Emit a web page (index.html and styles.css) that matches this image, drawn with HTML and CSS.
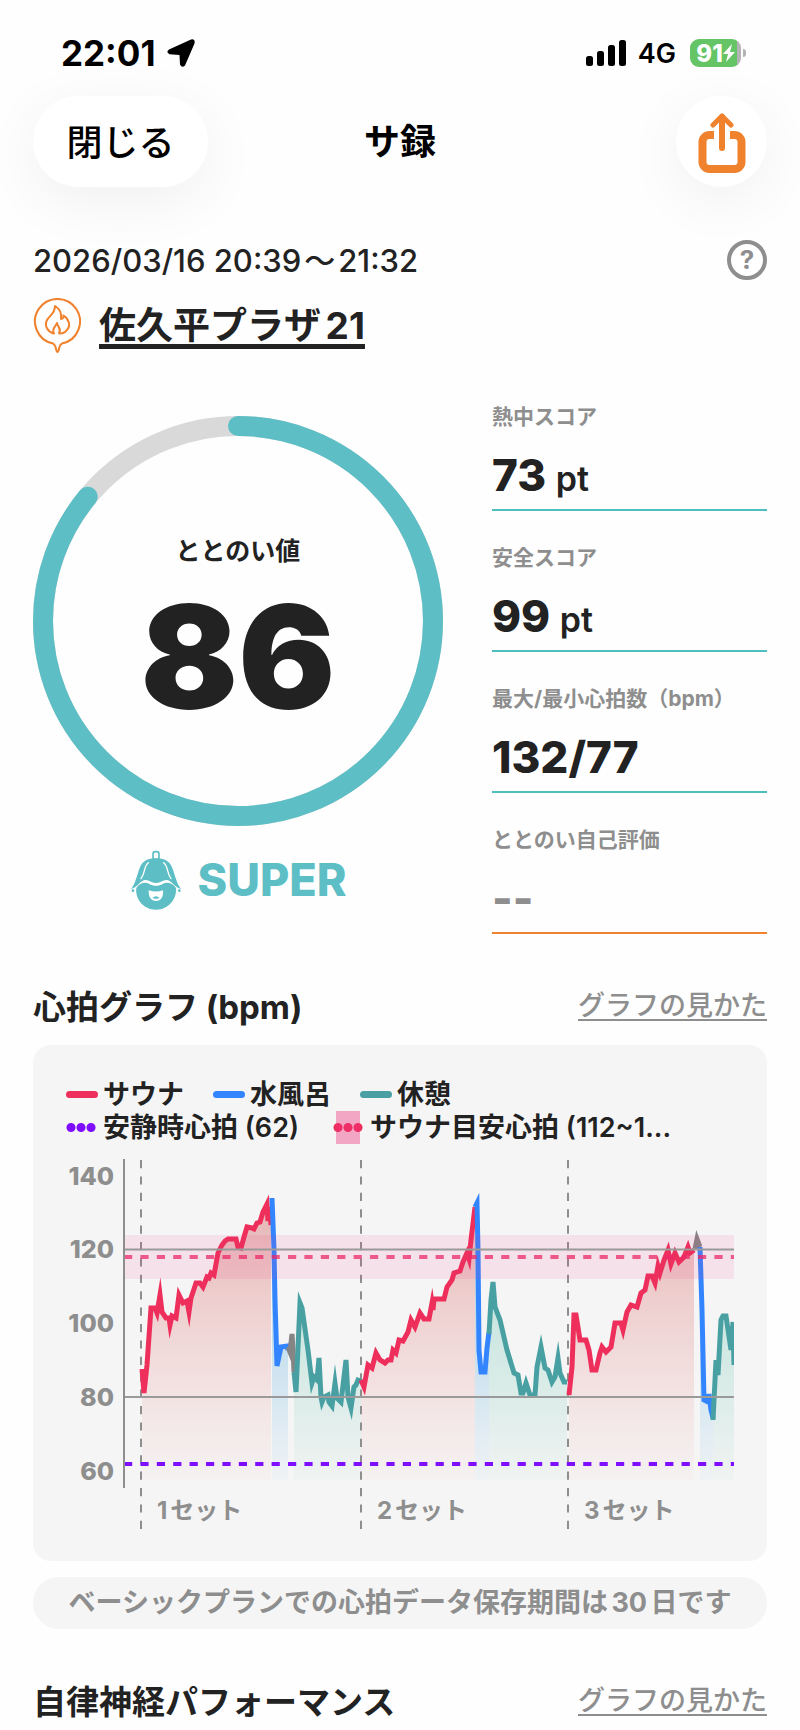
FILE: index.html
```html
<!DOCTYPE html>
<html lang="ja">

<head>
    <meta charset="UTF-8">
    <meta name="viewport" content="width=device-width, initial-scale=1.0">
    <title>サ録</title>
    <link rel="stylesheet" href="styles.css">
</head>

<body>
    <div class="status">
        <span class="time">22:01</span>
        <svg class="location" viewBox="0 0 28 28" width="28" height="28">
            <path d="M24 .5L2 10.500Q-1.500 13 2.500 15.200L12.500 16L13 25.500Q15 29.500 18 26.500L27.500 4.500Q28.500 -1 24 .5Z" />
        </svg>
        <svg class="signal" viewBox="0 0 40 26" width="40" height="26">
            <rect x="0" y="16" width="7" height="10" rx="2.500" />
            <rect x="11" y="11" width="7" height="15" rx="2.500" />
            <rect x="22" y="5" width="7" height="21" rx="2.500" />
            <rect x="33" y="0" width="7" height="26" rx="2.500" />
        </svg>
        <span class="network">4G</span>
        <span class="battery">
            <span class="level">91</span>
            <svg viewBox="0 0 12 18" width="12" height="18">
                <path d="M9 0L0 10h5L3 18l9-10H7z" fill="#fff" />
            </svg>
        </span>
    </div>

    <header class="nav">
        <button class="close" type="button">閉じる</button>
        <h1>サ録</h1>
        <button class="share" type="button" aria-label="共有">
            <svg viewBox="0 0 48 60" width="48" height="60" fill="none" stroke="#f0822d">
                <path d="M16 22H11.500a7 7 0 0 0-7 7V49a7 7 0 0 0 7 7H36.500a7 7 0 0 0 7-7V29a7 7 0 0 0-7-7H32" stroke-width="8" />
                <path d="M24 35V4" stroke-width="6" stroke-linecap="round" />
                <path d="M15 12L24 3L33 12" stroke-width="5" stroke-linecap="round" stroke-linejoin="round" />
            </svg>
        </button>
    </header>

    <main>
        <div class="date">
            <time>2026/03/16 20:39<span>〜</span>21:32</time>
            <button class="help" type="button" aria-label="ヘルプ">?</button>
        </div>
        <div class="place">
            <svg viewBox="0 0 48 56" width="48" height="56" fill="none" stroke="#f0822d" stroke-width="2" stroke-linejoin="round">
                <path d="M20 45.500A22.500 22.500 0 1 1 29 45.500Q26.500 47 26 51Q24.500 57 23 51Q22.500 47 20 45.500Z" />
                <path d="M21 35.500C15 34 11 28 14 22C16 18 22 16 22 8C27 11 29 15 28 21C30 21 31 19 30.500 17.500C36 21 38 28 34 32C32 35 28 36 26 35C29 31 25 30 24 25C23 28 18 31 21 35.500Z" />
            </svg>
            <a href="#">佐久平プラザ21</a>
        </div>

        <section class="scores">
            <div class="total">
                <div class="ring">
                    <svg viewBox="0 0 410 410" fill="none" stroke-width="20">
                        <circle cx="205" cy="205" r="195" stroke="#d9d9d9" />
                        <circle cx="205" cy="205" r="195" stroke="#5dbfc5" stroke-linecap="round" pathLength="100" stroke-dasharray="86 100" transform="rotate(-90 205 205)" />
                    </svg>
                    <div class="ring-text">
                        <span class="ring-label">ととのい値</span>
                        <strong>86</strong>
                    </div>
                </div>
                <div class="rank">
                    <svg viewBox="15 14 156 180" width="52" height="60" fill="#5dbfc5">
                        <rect x="84" y="19" width="18" height="24" rx="7" fill="none" stroke="#5dbfc5" stroke-width="5" />
                        <path d="M34 128C44 112 60 110 72 115C84 123 102 123 114 115C126 110 142 112 153 128C156 162 130 193 93 193C56 193 30 162 34 128Z" />
                        <path d="M18 131C30 118 36 90 44 68C52 46 70 39 93 39C116 39 134 46 142 68C150 90 156 118 169 131C150 128 140 104 124 104C112 104 108 113 93 113C78 113 74 104 62 104C46 104 36 128 18 131Z" />
                        <path d="M70 52C55 64 62 82 48 100M116 52C131 64 124 82 138 100" fill="none" stroke="#fff" stroke-width="4" stroke-linecap="round" />
                        <path d="M71 135Q93 142 114 135C116 154 108 167 93 167C78 167 70 154 71 135Z" fill="#fff" />
                        <path d="M82 158Q93 148 104 158Q93 162 82 158Z" />
                        <circle cx="24" cy="136" r="4" />
                        <circle cx="163" cy="136" r="4" />
                    </svg>
                    <span>SUPER</span>
                </div>
            </div>
            <dl class="items">
                <div>
                    <dt>熱中スコア</dt>
                    <dd>73 <small>pt</small></dd>
                </div>
                <div>
                    <dt>安全スコア</dt>
                    <dd>99 <small>pt</small></dd>
                </div>
                <div>
                    <dt>最大/最小心拍数（bpm）</dt>
                    <dd>132/77</dd>
                </div>
                <div class="empty">
                    <dt>ととのい自己評価</dt>
                    <dd>--</dd>
                </div>
            </dl>
        </section>

        <div class="heading">
            <h2>心拍グラフ (bpm)</h2>
            <a href="#">グラフの見かた</a>
        </div>
        <section class="card">
            <ul class="legend">
                <li><i class="bar red"></i>サウナ</li>
                <li><i class="bar blue"></i>水風呂</li>
                <li><i class="bar teal"></i>休憩</li>
            </ul>
            <ul class="legend guides">
                <li><i class="dots purple"></i>安静時心拍 (62)</li>
                <li><i class="dots pink"></i>サウナ目安心拍 (112~1...</li>
            </ul>
            <svg class="chart" viewBox="-58 -1 668 370">
                <defs>
                    <linearGradient id="fill-red" gradientUnits="userSpaceOnUse" x1="0" y1="60" x2="0" y2="320">
                        <stop offset="0" stop-color="#d05050" stop-opacity=".36" />
                        <stop offset="1" stop-color="#f08080" stop-opacity=".03" />
                    </linearGradient>
                    <linearGradient id="fill-blue" gradientUnits="userSpaceOnUse" x1="0" y1="90" x2="0" y2="320">
                        <stop offset="0" stop-color="#3aa0c8" stop-opacity=".4" />
                        <stop offset="1" stop-color="#3aa0e8" stop-opacity=".03" />
                    </linearGradient>
                    <linearGradient id="fill-teal" gradientUnits="userSpaceOnUse" x1="0" y1="130" x2="0" y2="320">
                        <stop offset="0" stop-color="#45b8a0" stop-opacity=".28" />
                        <stop offset="1" stop-color="#45b8a0" stop-opacity=".03" />
                    </linearGradient>
                    <clipPath id="plot">
                        <rect x="0" y="0" width="610" height="330" />
                    </clipPath>
                </defs>
                <g class="sets">
                    <path d="M17 0V369M237 0V369M444 0V369" />
                </g>
                <g clip-path="url(#plot)">
                    <g id="areas"></g>
                    <g id="lines"></g>
                </g>
                <rect class="band" x="0" y="75" width="610" height="44" />
                <path class="grid" d="M0 89.500H610M0 237H610" />
                <path class="target" d="M0 97H610" />
                <path class="rest" d="M0 304H610" />
                <path class="axis" d="M0 -1V328" />
                <g class="y-labels">
                    <text x="-10" y="25">140</text>
                    <text x="-10" y="98">120</text>
                    <text x="-10" y="172">100</text>
                    <text x="-10" y="246">80</text>
                    <text x="-10" y="320">60</text>
                </g>
                <g class="x-labels">
                    <text x="33" y="359">1セット</text>
                    <text x="253" y="359">2セット</text>
                    <text x="460" y="359">3セット</text>
                </g>
            </svg>
        </section>
        <p class="note">ベーシックプランでの心拍データ保存期間は30日です</p>

        <div class="heading">
            <h2>自律神経パフォーマンス</h2>
            <a href="#">グラフの見かた</a>
        </div>
    </main>
    <script src="chart.js"></script>
</body>

</html>
```

FILE: styles.css
```css
* {
    margin: 0;
    padding: 0;
    box-sizing: border-box;
}

body {
    background: #fefefe;
    color: #222;
    font-family: Inter, "Noto Sans CJK JP", sans-serif;
    text-autospace: normal;
}

svg {
    display: block;
}

button {
    border: none;
    background: #fff;
    font-family: inherit;
    cursor: pointer;
}

ul {
    list-style: none;
}

/* status bar */
.status {
    display: flex;
    align-items: center;
    height: 96px;
    padding: 10px 54px 0 61px;
    color: #000;
}

.time {
    font-size: 35px;
    font-weight: 700;
}

.location {
    margin-left: 12px;
}

.signal {
    margin-left: auto;
}

.network {
    margin: 0 14px 0 12px;
    font-size: 27px;
    font-weight: 600;
}

.battery {
    display: flex;
    align-items: center;
    justify-content: center;
    position: relative;
    width: 51px;
    height: 28px;
    margin-right: 5px;
    border-radius: 9px;
    background: linear-gradient(90deg, #65c466 92%, #b3b3b3 92%);
    color: #fff;
}

.battery::after {
    content: "";
    position: absolute;
    right: -5px;
    top: 10px;
    width: 3px;
    height: 8px;
    border-radius: 0 3px 3px 0;
    background: #b3b3b3;
}

.level {
    font-size: 24px;
    font-weight: 800;
}

/* nav */
.nav {
    display: grid;
    grid-template-columns: 1fr auto 1fr;
    align-items: center;
    padding: 0 33px;
    color: #000;
}

.nav h1 {
    font-size: 36px;
    line-height: 48px;
    font-weight: 700;
}

.close,
.share {
    height: 91px;
    border-radius: 46px;
    box-shadow: 0 14px 60px rgba(0, 0, 0, .06);
}

.close {
    justify-self: start;
    width: 175px;
    padding-bottom: 4px;
    color: #000;
    font-size: 36px;
    font-weight: 500;
}

.share {
    display: grid;
    place-items: center;
    justify-self: end;
    width: 91px;
    padding-top: 2px;
}

main {
    padding: 53px 33px 11px;
}

.date {
    display: flex;
    align-items: flex-start;
    justify-content: space-between;
    height: 42px;
    font-size: 31px;
    line-height: 41px;
    font-weight: 500;
}

.date span {
    margin: 0 3px;
}

.help {
    width: 40px;
    height: 40px;
    border: 4px solid #8e8e8e;
    border-radius: 50%;
    color: #8e8e8e;
    font-size: 26px;
    line-height: 32px;
    font-weight: 700;
}

.place {
    display: flex;
    align-items: center;
    gap: 18px;
    margin-top: 16px;
}

.place a {
    padding-top: 4px;
    border-bottom: 5px solid #222;
    color: #222;
    font-size: 37px;
    line-height: 36px;
    font-weight: 700;
    text-decoration: none;
}

/* scores */
.scores {
    display: grid;
    grid-template-columns: 410fr 275fr;
    gap: 49px;
    margin-top: 48px;
}

.ring {
    position: relative;
    margin-top: 14px;
}

.ring-text {
    display: flex;
    flex-direction: column;
    align-items: center;
    justify-content: center;
    gap: 20px;
    position: absolute;
    inset: 0;
    padding-top: 20px;
}

.ring-label {
    font-size: 25px;
    line-height: 32px;
    font-weight: 700;
}

.ring strong {
    font-size: 144px;
    line-height: 140px;
    font-weight: 900;
}

.rank {
    display: flex;
    align-items: center;
    justify-content: center;
    gap: 16px;
    margin-top: 24px;
    color: #5dbfc5;
    font-size: 45px;
    line-height: 60px;
    font-weight: 800;
}

.items {
    display: flex;
    flex-direction: column;
    gap: 32px;
}

.items div {
    padding-bottom: 9px;
    border-bottom: 2px solid #4dbfbf;
}

.items dt {
    color: #8e8e8e;
    font-size: 21px;
    line-height: 30px;
    font-weight: 700;
    white-space: nowrap;
}

.items dd {
    margin-top: 18px;
    font-size: 44px;
    line-height: 50px;
    font-weight: 800;
}

.items small {
    font-size: 34px;
    line-height: 34px;
    font-weight: 600;
}

.items .empty {
    border-color: #f0822d;
}

.empty dd {
    color: #8e8e8e;
}

/* graph */
.heading {
    display: flex;
    align-items: center;
    justify-content: space-between;
    margin-top: 53px;
}

.heading h2 {
    font-size: 33px;
    line-height: 40px;
    font-weight: 700;
}

.heading a {
    border-bottom: 2px solid #8e8e8e;
    color: #8e8e8e;
    font-size: 27px;
    line-height: 26px;
    font-weight: 500;
    text-decoration: none;
}

.card {
    margin-top: 18px;
    padding: 33px 33px 32px;
    border-radius: 18px;
    background: #f5f5f5;
}

.legend {
    display: flex;
    gap: 29px;
    font-size: 27px;
    line-height: 33px;
    font-weight: 600;
    white-space: nowrap;
}

.guides {
    gap: 34px;
}

.legend li {
    display: flex;
    align-items: center;
    gap: 5px;
}

.bar {
    width: 32px;
    height: 7px;
    border-radius: 4px;
}

.red {
    background: #ee2f5b;
}

.blue {
    background: #3385ff;
}

.teal {
    background: #49a0a3;
}

.dots {
    position: relative;
    width: 32px;
    height: 33px;
    background: radial-gradient(circle at 5px 50%, currentColor 4px, transparent 5px) 0 0 / 10px 33px repeat-x;
    background-clip: content-box;
    padding-right: 2px;
}

.purple {
    color: #7f0dff;
}

.pink {
    color: #ee2f5b;
}

.pink::before {
    content: "";
    position: absolute;
    inset: 0 5px 0 3px;
    background: #ee2f7b;
    opacity: .4;
}

.chart {
    width: 100%;
    margin-top: 15px;
    font-weight: 700;
}

.chart path {
    fill: none;
}

#lines path {
    stroke-width: 5;
    stroke-miterlimit: 8;
}

.sets path {
    stroke: #8e8e8e;
    stroke-width: 2;
    stroke-dasharray: 8.2 8.2;
}

.band {
    fill: #ee2f7b;
    opacity: .1;
}

.grid {
    stroke: #9a9a9a;
    stroke-width: 2;
}

.axis {
    stroke: #8e8e8e;
    stroke-width: 2;
}

.target,
.rest {
    stroke: #7f0dff;
    stroke-width: 4;
    stroke-dasharray: 8.2 8.2;
}

.target {
    stroke: #ec2a68;
    opacity: .75;
}

.chart text {
    fill: #8e8e8e;
    font-size: 24px;
}

.chart .y-labels text {
    font-size: 25px;
    font-weight: 800;
    text-anchor: end;
}

.note {
    margin-top: 16px;
    border-radius: 26px;
    background: #f5f5f5;
    color: #8e8e8e;
    font-size: 27px;
    line-height: 52px;
    font-weight: 700;
    text-align: center;
    white-space: nowrap;
}
```

FILE: chart.js
```js
const colors = { red: '#ee2f5b', blue: '#3385ff', teal: '#49a0a3', gray: '#858585' }
const bottom = 320

// one entry per stage: color, then x,y pairs
const stages = [
    ['red', '18,209 20,233 23,205 27,148 31,148 33,153 36,135 38,152 42,158 45,158 46,165 48,156 52,158 55,135 59,143 63,141 65,152 67,138 72,123 76,123 79,127 83,117 85,118 87,113 90,115 94,93 98,85 101,81 104,79 112,79 114,87 117,88 120,77 123,67 128,68 130,69 133,63 136,62 139,52 141,48 143,44 144,61 146,47 147,65'],
    ['blue', '148,38 150,90 151,140 153,206 157,187 163,186 164,190'],
    ['gray', '164,187 166,192 168,174 169,190 170,212'],
    ['teal', '170,212 172,232 176,143 178,148 184,190 188,223 190,217 193,220 195,198 197,237 198,242 200,237 204,235 205,242 208,246 211,223 213,238 217,242 222,200 224,237 227,248 230,227 232,225 234,220 237,221'],
    ['red', '237,220 240,227 244,205 248,208 252,193 256,200 261,203 264,200 267,200 269,190 272,193 275,180 279,181 284,172 287,160 291,167 296,153 300,159 305,159 308,143 309,150 310,139 320,139 323,127 328,120 330,113 336,111 339,102 343,93 345,99 347,80 351,47'],
    ['blue', '351,47 353,43 354,90 355,190 357,212 361,212 363,188 365,172'],
    ['teal', '365,174 367,140 369,122 371,147 376,160 383,190 390,213 394,215 397,233 399,233 402,223 406,235 411,235 413,207 417,187 421,208 424,210 428,222 431,217 434,198 436,213 440,222 443,222'],
    ['red', '445,235 448,207 450,155 452,155 456,180 462,180 465,190 468,210 472,210 476,193 478,187 482,192 487,187 491,163 497,163 499,170 503,152 507,145 513,147 517,133 521,130 524,116 528,116 531,123 534,106 536,113 540,100 544,90 547,104 551,93 555,102 560,97 564,87 566,93 570,90'],
    ['gray', '571,89 573,79 576,87'],
    ['blue', '576,87 578,150 580,240 584,242 585,234 587,250 589,258'],
    ['teal', '589,260 592,200 594,215 597,160 599,156 602,156 607,190 609,162 610,205']
]

function addPath(parent, d, attr, value) {
    const path = document.createElementNS('http://www.w3.org/2000/svg', 'path')
    path.setAttribute('d', d)
    path.style[attr] = value
    document.getElementById(parent).appendChild(path)
}

stages.forEach(function (stage) {
    const color = stage[0]
    const points = stage[1].split(' ')
    const first = points[0].split(',')[0]
    const line = 'M' + points.join('L')
    addPath('lines', line, 'stroke', colors[color])
    if (color !== 'gray') {
        addPath('areas', line + 'V' + bottom + 'H' + first + 'Z', 'fill', 'url(#fill-' + color + ')')
    }
})
```
